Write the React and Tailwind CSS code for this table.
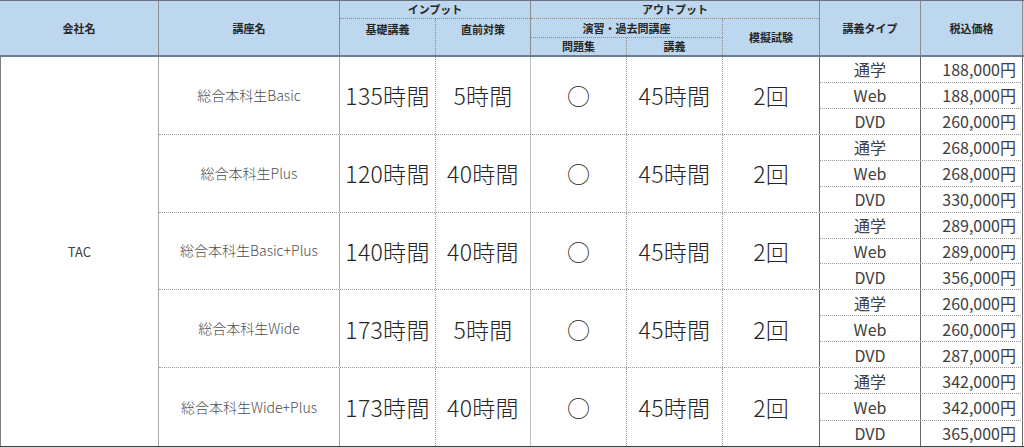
import React from "react";

const blocks = [
  { name: "総合本科生Basic", base: "135時間", pre: "5時間", prices: ["188,000円", "188,000円", "260,000円"] },
  { name: "総合本科生Plus", base: "120時間", pre: "40時間", prices: ["268,000円", "268,000円", "330,000円"] },
  { name: "総合本科生Basic+Plus", base: "140時間", pre: "40時間", prices: ["289,000円", "289,000円", "356,000円"] },
  { name: "総合本科生Wide", base: "173時間", pre: "5時間", prices: ["260,000円", "260,000円", "287,000円"] },
  { name: "総合本科生Wide+Plus", base: "173時間", pre: "40時間", prices: ["342,000円", "342,000円", "365,000円"] },
];
const types = ["通学", "Web", "DVD"];

function Block({ b, last }) {
  return (
    <div className={"flex h-[78px] " + (last ? "" : "border-b border-dotted border-[#9a9a9a]")}>
      <div className="w-[181px] border-r border-[#a6a6a6] flex items-center justify-center text-[14px] font-light text-[#4d4d4d]">
        {b.name}
      </div>
      <div className="w-[96px] border-r border-dotted border-[#9a9a9a] flex items-center justify-center text-[23px] font-light tracking-[0.3px] text-[#262626]">
        {b.base}
      </div>
      <div className="w-[95px] border-r border-[#bfbfbf] flex items-center justify-center text-[23px] font-light tracking-[0.3px] text-[#262626]">
        {b.pre}
      </div>
      <div className="w-[96px] border-r border-dotted border-[#9a9a9a] flex items-center justify-center text-[23px] font-light text-[#262626]">
        ○
      </div>
      <div className="w-[96px] border-r border-dotted border-[#9a9a9a] flex items-center justify-center text-[23px] font-light tracking-[0.3px] text-[#262626]">
        45時間
      </div>
      <div className="w-[97px] border-r border-[#666666] flex items-center justify-center text-[23px] font-light text-[#262626]">
        2回
      </div>
      <div className="w-[203px] flex flex-col">
        {types.map((t, i) => (
          <div
            key={t}
            className={"flex flex-1 " + (i < 2 ? "border-b border-dotted border-[#9a9a9a]" : "")}
          >
            <div className="w-[101px] border-r border-[#666666] flex items-center justify-center text-[16px] text-[#404040]">
              {t}
            </div>
            <div className="w-[102px] border-r border-[#666666] flex items-center justify-end pr-[6px] text-[16px] text-[#404040]">
              {b.prices[i]}
            </div>
          </div>
        ))}
      </div>
    </div>
  );
}

export default function App() {
  return (
    <div className="w-[1024px] h-[447px] bg-white font-['Noto_Sans_CJK_JP',sans-serif] overflow-hidden">
      {/* header */}
      <div className="flex h-[57px] bg-[#bdd7ee] border-t border-t-[#6b7280] border-b-2 border-b-[#6e7b8b] text-[11px] font-bold text-[#262626]">
        <div className="w-[159px] border-r border-[#8c8c8c] flex items-center justify-center">会社名</div>
        <div className="w-[181px] border-r border-[#8c8c8c] flex items-center justify-center">講座名</div>
        <div className="w-[191px] border-r border-[#8c8c8c] flex flex-col">
          <div className="h-[18px] border-b border-dotted border-[#8c8c8c] flex items-center justify-center">インプット</div>
          <div className="flex flex-1">
            <div className="w-[96px] border-r border-dotted border-[#8c8c8c] flex justify-center pt-[2px]">基礎講義</div>
            <div className="flex-1 flex justify-center pt-[2px]">直前対策</div>
          </div>
        </div>
        <div className="w-[289px] border-r border-[#8c8c8c] flex flex-col">
          <div className="h-[18px] border-b border-dotted border-[#8c8c8c] flex items-center justify-center">アウトプット</div>
          <div className="flex flex-1">
            <div className="w-[192px] border-r border-dotted border-[#8c8c8c] flex flex-col">
              <div className="h-[19px] border-b border-dotted border-[#8c8c8c] flex items-center justify-center">演習・過去問講座</div>
              <div className="flex flex-1">
                <div className="w-[96px] border-r border-dotted border-[#8c8c8c] flex items-center justify-center">問題集</div>
                <div className="flex-1 flex items-center justify-center">講義</div>
              </div>
            </div>
            <div className="flex-1 flex items-center justify-center">模擬試験</div>
          </div>
        </div>
        <div className="w-[101px] border-r border-[#8c8c8c] flex items-center justify-center">講義タイプ</div>
        <div className="w-[102px] border-r border-[#8c8c8c] flex items-center justify-center">税込価格</div>
      </div>
      {/* body */}
      <div className="flex h-[390px] border-b border-[#404040]">
        <div className="w-[159px] border-l border-r border-l-[#7f7f7f] border-r-[#a6a6a6] flex items-center justify-center text-[13px] text-[#404040]">
          TAC
        </div>
        <div className="flex flex-col">
          {blocks.map((b, i) => (
            <Block key={b.name} b={b} last={i === blocks.length - 1} />
          ))}
        </div>
      </div>
    </div>
  );
}
